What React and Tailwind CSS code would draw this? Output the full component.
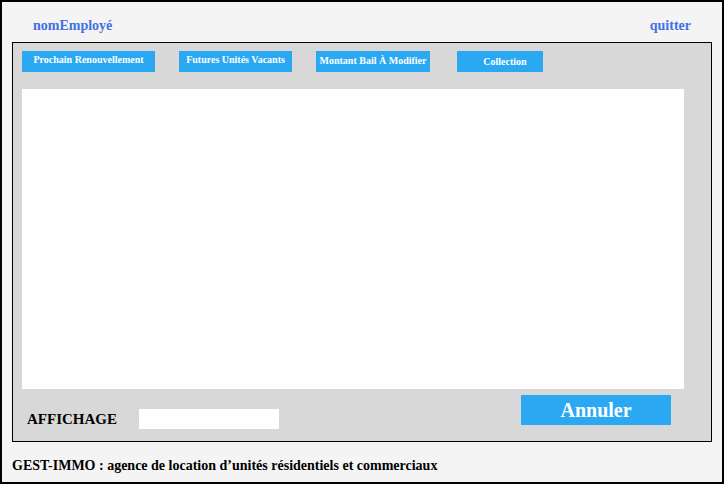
export default function App() {
  const tabs = [
    { label: 'Prochain Renouvellement', w: 'w-[133px]', extra: 'pb-[3px]' },
    { label: 'Futures Unités Vacants', w: 'w-[113px]', extra: 'pb-[4px]' },
    { label: 'Montant Bail À Modifier', w: 'w-[114px]', extra: 'pb-[2px]' },
    { label: 'Collection', w: 'w-[86px]', extra: 'ml-[3px] pl-[10px]' },
  ]

  return (
    <div className="w-[724px] h-[484px] border-2 border-black bg-[#f5f4f5] font-['Liberation_Serif',serif] font-bold">
      <div className="h-[40px] flex items-center justify-between px-[31px] pt-[6px] text-[14px] text-[#4170e6]">
        <span>nomEmployé</span>
        <span>quitter</span>
      </div>

      <div className="ml-[10px] w-[700px] h-[400px] border border-black bg-[#d8d8d8] flex flex-col">
        <div className="flex gap-6 pl-[9px] pt-[8px]">
          {tabs.map((t, i) => (
            <button
              key={i}
              className={`${t.w} ${t.extra} h-[21px] bg-[#2aa9f2] text-white text-[10px] leading-[14px] text-center whitespace-nowrap`}
            >
              {t.label}
            </button>
          ))}
        </div>

        <div className="ml-[9px] mt-[17px] w-[662px] h-[300px] bg-white"></div>

        <div className="flex justify-between flex-1">
          <div className="flex items-center self-end mb-[11px] ml-[14px]">
            <span className="text-[15px] text-black w-[112px]">AFFICHAGE</span>
            <div className="w-[140px] h-[20px] bg-white"></div>
          </div>
          <button className="mt-[6px] mr-[40px] w-[150px] h-[30px] bg-[#2aa9f2] text-white text-[20px] leading-[28px]">
            Annuler
          </button>
        </div>
      </div>

      <div className="px-[10px] pt-[13px] text-[14px] text-black">
        GEST-IMMO : agence de location d’unités résidentiels et commerciaux
      </div>
    </div>
  )
}
